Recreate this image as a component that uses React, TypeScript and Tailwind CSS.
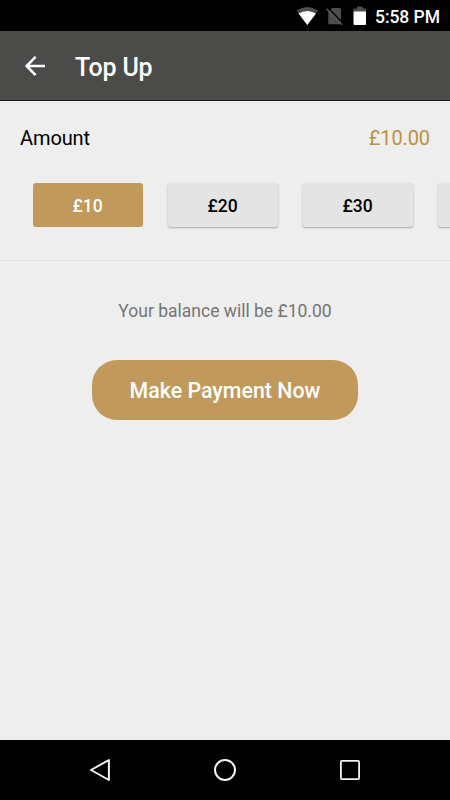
import React from "react";

function StatusBar() {
  return (
    <div className="flex h-[31px] shrink-0 items-center bg-black pl-[296px] pr-2">
      <svg className="h-[31px] w-[72px] shrink-0" viewBox="296 0 72 31">
        <path d="M307.3 25 L296.6 10.6 Q307.3 3.2 318 10.6 Z" fill="#4d4d4d" />
        <path d="M307.3 25 L298.6 13.6 Q307.3 8.6 316 13.6 Z" fill="#fff" />
        <path d="M332 8 H339.5 Q341 8 341 9.5 V24.2 H328.3 V12 Z" fill="#4d4d4d" />
        <path d="M327.7 7.6 L343.2 23.4" stroke="#000" strokeWidth="1.4" />
        <path d="M326.5 8.8 L342 24.8" stroke="#5a5a5a" strokeWidth="1.4" />
        <path d="M357 6.5 H362.7 V8.5 H366 V12 H353.5 V8.5 H357 Z" fill="#4d4d4d" />
        <path d="M353.5 11.5 H366 V24 Q366 25 365 25 H354.5 Q353.5 25 353.5 24 Z" fill="#fff" />
      </svg>
      <span className="ml-[7px] mt-[2px] whitespace-nowrap text-[17.5px] font-medium leading-5 tracking-[-0.05px] text-white">5:58 PM</span>
    </div>
  );
}

function AmountButton({ label, selected }: { label?: string; selected?: boolean }) {
  return (
    <button
      className={
        selected
          ? "h-11 w-[110px] shrink-0 rounded-[3px] bg-[#c1995a] pt-[2px] text-[17.5px] font-medium text-white"
          : "h-11 w-[110px] shrink-0 rounded-[3px] bg-[#e4e4e4] pt-[2px] text-[17.5px] font-medium text-black shadow-[0_1px_2px_rgba(0,0,0,0.3)]"
      }
    >
      {label}
    </button>
  );
}

export default function App() {
  return (
    <div className="flex h-[800px] w-[450px] flex-col overflow-hidden bg-[#eeeeee] font-['Roboto',sans-serif]">
      <StatusBar />
      <header className="flex h-[70px] shrink-0 items-center border-b border-[#1c1814] bg-[#4b4b49] pl-[25px]">
        <svg className="h-5 w-5 shrink-0" viewBox="0 0 20 20" fill="none" stroke="#fff" strokeWidth="2.5">
          <path d="M20 10 H2 M10.6 .9 L1.6 10 L10.6 19.1" />
        </svg>
        <h1 className="ml-[30px] mt-[4px] text-[25px] font-medium leading-8 tracking-[-0.15px] text-white">Top Up</h1>
      </header>
      <section className="h-[160px] shrink-0 border-b border-[#e6dfd8]">
        <div className="flex items-center justify-between px-5 pt-[25px] text-[20px] leading-6 tracking-[-0.1px]">
          <span className="text-black">Amount</span>
          <span className="text-[#bc9140]">£10.00</span>
        </div>
        <div className="mt-[29px] flex gap-[25px] overflow-hidden pb-[6px] pl-[32.5px] pt-[4px]">
          <AmountButton label="£10" selected />
          <AmountButton label="£20" />
          <AmountButton label="£30" />
          <AmountButton />
        </div>
      </section>
      <main className="flex flex-1 flex-col items-center pt-[38px]">
        <p className="text-[17.5px] leading-6 text-[#757575]">Your balance will be £10.00</p>
        <button className="mt-[37px] h-[60px] w-[266px] rounded-[25px] bg-[#c1995a] pt-[2px] text-[21.4px] font-medium text-white">
          Make Payment Now
        </button>
      </main>
      <nav className="flex h-[60px] shrink-0 items-center justify-between bg-black px-[88px]">
        <svg className="h-6 w-6" viewBox="88 758 24 24" fill="none" stroke="#f2f2f2" strokeWidth="2" strokeLinejoin="round">
          <path d="M108.9 760 V780 L91 770 Z" />
        </svg>
        <svg className="h-6 w-6" viewBox="213 758 24 24" fill="none" stroke="#f2f2f2" strokeWidth="2">
          <circle cx="225" cy="770" r="10" />
        </svg>
        <svg className="h-6 w-6" viewBox="338 758 24 24" fill="none" stroke="#f2f2f2" strokeWidth="1.8">
          <rect x="340.9" y="760.9" width="18.2" height="18.2" rx="1" />
        </svg>
      </nav>
    </div>
  );
}
